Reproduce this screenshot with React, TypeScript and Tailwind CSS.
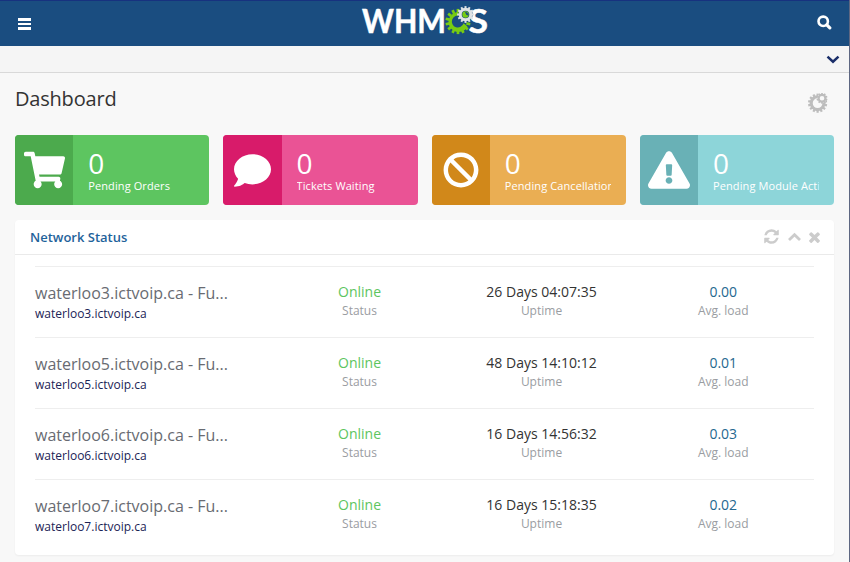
import type { ReactNode } from "react";
import { FaShoppingCart, FaComment, FaBan, FaExclamationTriangle } from "react-icons/fa";

const teeth = (n: number, r: number, w: number, h: number) =>
  Array.from({ length: n }, (_, i) => (
    <rect key={i} x={-w / 2} y={-r} width={w} height={h} transform={`rotate(${(i * 360) / n})`} />
  ));

function Logo() {
  return (
    <svg width="128" height="44" viewBox="0 0 128 44" className="mt-[2px]">
      <g fill="#fff" fontFamily="Lato, sans-serif" fontWeight="700" fontSize="33" stroke="#fff" strokeWidth="0.5">
        <text x="1" y="30.3" textLength="84" lengthAdjust="spacingAndGlyphs">WHM</text>
        <text x="107.5" y="30.3" textLength="19.5" lengthAdjust="spacingAndGlyphs">S</text>
      </g>
      <g transform="translate(97 18.5)" fill="#78cc12">
        {teeth(14, 12.6, 2.7, 4)}
        <path d="M6 -7.8 A10 10 0 1 0 9.5 5 L5.6 1.8 A6 6 0 1 1 2 -5.6Z" />
      </g>
      <g transform="translate(104.5 11.5)">
        <circle r="7.2" fill="#1a4d80" />
        <g fill="#dfe2e5">{teeth(12, 8.4, 2, 3)}</g>
        <circle r="5.3" fill="none" stroke="#dfe2e5" strokeWidth="3" />
        <circle r="3.2" fill="#78cc12" />
        <path d="M-.5 -2.5 A3 3 0 0 1 3 1.2 L.7 .2Z" fill="#1a4d80" />
      </g>
    </svg>
  );
}

function SearchIcon() {
  return (
    <svg width="15" height="15" viewBox="0 0 15 15" fill="none" stroke="#fff">
      <circle cx="6.2" cy="6.3" r="4.7" strokeWidth="2.6" />
      <path d="M9.8 9.9l3 3" strokeWidth="3.2" strokeLinecap="round" />
    </svg>
  );
}

function GearIcon() {
  return (
    <svg width="20" height="20" viewBox="0 0 20 20" fill="#bdbdbd">
      <g transform="translate(9.6 10.2)">
        {teeth(14, 9.6, 2.2, 3)}
        <circle r="6.4" fill="none" stroke="#bdbdbd" strokeWidth="3.1" />
      </g>
      <g transform="translate(14 5.2)">
        <circle r="4.8" fill="#f8f8f8" />
        {teeth(10, 5.5, 1.7, 2)}
        <circle r="3.4" fill="none" stroke="#bdbdbd" strokeWidth="2.2" />
      </g>
    </svg>
  );
}

function RefreshIcon() {
  return (
    <svg width="17" height="17" viewBox="0 0 1792 1792" fill="currentColor">
      <path d="M1639 1056q0 5-1 7-64 268-268 434.5T892 1664q-146 0-282.5-55T366 1452l-129 129q-19 19-45 19t-45-19-19-45v-448q0-26 19-45t45-19h448q26 0 45 19t19 45-19 45l-137 137q71 66 161 102t187 36q134 0 250-65t186-179q11-17 53-117 8-23 30-23h192q13 0 22.5 9.5t9.5 22.5zm25-800v448q0 26-19 45t-45 19h-448q-26 0-45-19t-19-45 19-45l138-138Q1098 384 897 384q-134 0-250 65T461 628q-11 17-53 117-8 23-30 23H179q-13 0-22.5-9.5T147 736v-7q65-268 270-434.5T897 128q146 0 284 55.5T1426 340l130-129q19-19 45-19t45 19 19 45z" />
    </svg>
  );
}

type CardProps = { label: string; side: string; body: string; icon: ReactNode };

const cards: CardProps[] = [
  { label: "Pending Orders", side: "bg-[#4caa4d]", body: "bg-[#5dc560]", icon: <FaShoppingCart className="h-[38px] w-[41px]" /> },
  { label: "Tickets Waiting", side: "bg-[#d81b6a]", body: "bg-[#ea5395]", icon: <FaComment className="size-[37px]" /> },
  { label: "Pending Cancellations", side: "bg-[#d1881a]", body: "bg-[#eaae53]", icon: <FaBan className="size-[36px]" /> },
  { label: "Pending Module Actions", side: "bg-[#69b1b6]", body: "bg-[#8dd5d9]", icon: <FaExclamationTriangle className="size-[42px]" /> },
];

function StatCard({ label, side, body, icon }: CardProps) {
  return (
    <div className={`flex h-[70px] min-w-0 overflow-hidden rounded-[4px] text-white ${body}`}>
      <div className={`flex w-[30%] shrink-0 items-center justify-center ${side}`}>{icon}</div>
      <div className="min-w-0 flex-1 px-[15px] pt-[13px]">
        <div className="text-[28px] leading-[30px]">0</div>
        <div className="overflow-hidden text-[11px] leading-[15px] tracking-[0.1px] whitespace-nowrap">{label}</div>
      </div>
    </div>
  );
}

const servers = [
  { id: 3, uptime: "26 Days 04:07:35", load: "0.00" },
  { id: 5, uptime: "48 Days 14:10:12", load: "0.01" },
  { id: 6, uptime: "16 Days 14:56:32", load: "0.03" },
  { id: 7, uptime: "16 Days 15:18:35", load: "0.02" },
];

function Metric({ value, label, color }: { value: string; label: string; color: string }) {
  return (
    <div className="pt-[15px] text-center">
      <div className={`text-[14px] leading-5 ${color}`}>{value}</div>
      <div className="text-[12px] leading-[18px] text-[#9a9da2]">{label}</div>
    </div>
  );
}

export default function App() {
  return (
    <div className="flex h-[562px] w-[850px] flex-col overflow-hidden border-r border-[#5e6782] bg-[#f8f8f8] font-['Open_Sans',sans-serif] text-[#333]">
      <header className="flex h-[46px] shrink-0 items-start justify-between border-t border-[#17327f] bg-[#1a4d80] pr-[17px] pl-[18px]">
        <div className="mt-[17px] flex w-[14px] flex-col gap-[2px]">
          <span className="h-[2.6px] w-[13px] bg-white" />
          <span className="h-[2.6px] w-[13px] bg-white" />
          <span className="h-[2.6px] w-[13px] bg-white" />
        </div>
        <Logo />
        <div className="mt-[14px]"><SearchIcon /></div>
      </header>
      <div className="flex h-[27px] shrink-0 items-center justify-end border-b border-[#d9d9d9] bg-[#f5f5f5] pr-[9px]">
        <svg width="14" height="10" viewBox="0 0 14 10" fill="none" stroke="#1a2e69" strokeWidth="2.5">
          <path d="M1.5 2.7l5.5 5 5.5-5" />
        </svg>
      </div>
      <main className="flex w-[849px] flex-col px-[15px]">
        <div className="flex h-[62px] items-start justify-between pr-[6px]">
          <h1 className="mt-[12px] text-[20px] leading-7 tracking-[-0.2px]">Dashboard</h1>
          <div className="mt-[20px]"><GearIcon /></div>
        </div>
        <div className="grid grid-cols-4 gap-[14px]">
          {cards.map((c) => <StatCard key={c.label} {...c} />)}
        </div>
        <section className="mt-[15px] h-[335px] rounded-[4px] bg-white shadow-[0_1px_2px_rgba(0,0,0,0.05)]">
          <div className="flex h-[35px] items-center justify-between border-b border-[#eaeaea] pr-[14.5px] pl-[15px]">
            <h2 className="pt-px text-[13px] font-semibold text-[#1f639b]">Network Status</h2>
            <div className="flex items-center gap-[8px] pb-px text-[#ccc]">
              <RefreshIcon />
              <svg width="13" height="10" viewBox="0 0 13 10" fill="none" stroke="currentColor" strokeWidth="2.8"><path d="M1 8l5.5-5.3L12 8" /></svg>
              <svg width="11" height="12" viewBox="302 238 1188 1316" fill="currentColor">
                <path d="M1490 1322q0 40-28 68l-136 136q-28 28-68 28t-68-28l-294-294-294 294q-28 28-68 28t-68-28l-136-136q-28-28-28-68t28-68l294-294-294-294q-28-28-28-68t28-68l136-136q28-28 68-28t68 28l294 294 294-294q28-28 68-28t68 28l136 136q28 28 28 68t-28 68l-294 294 294 294q28 28 28 68z" />
              </svg>
            </div>
          </div>
          <div className="px-5 pt-[11px]">
            {servers.map((s) => (
              <div key={s.id} className="grid h-[71px] grid-cols-[233.5px_182px_182px_181.5px] border-t border-[#eee]">
                <div className="pt-[15px]">
                  <div className="w-[205px] text-[16px] leading-[22px] text-[#686b72]">waterloo{s.id}.ictvoip.ca - Fu...</div>
                  <div className="text-[12px] leading-[20px] text-[#1b2456]">waterloo{s.id}.ictvoip.ca</div>
                </div>
                <Metric value="Online" label="Status" color="text-[#5dc560]" />
                <Metric value={s.uptime} label="Uptime" color="text-[#333]" />
                <Metric value={s.load} label="Avg. load" color="text-[#25688f]" />
              </div>
            ))}
          </div>
        </section>
      </main>
    </div>
  );
}
